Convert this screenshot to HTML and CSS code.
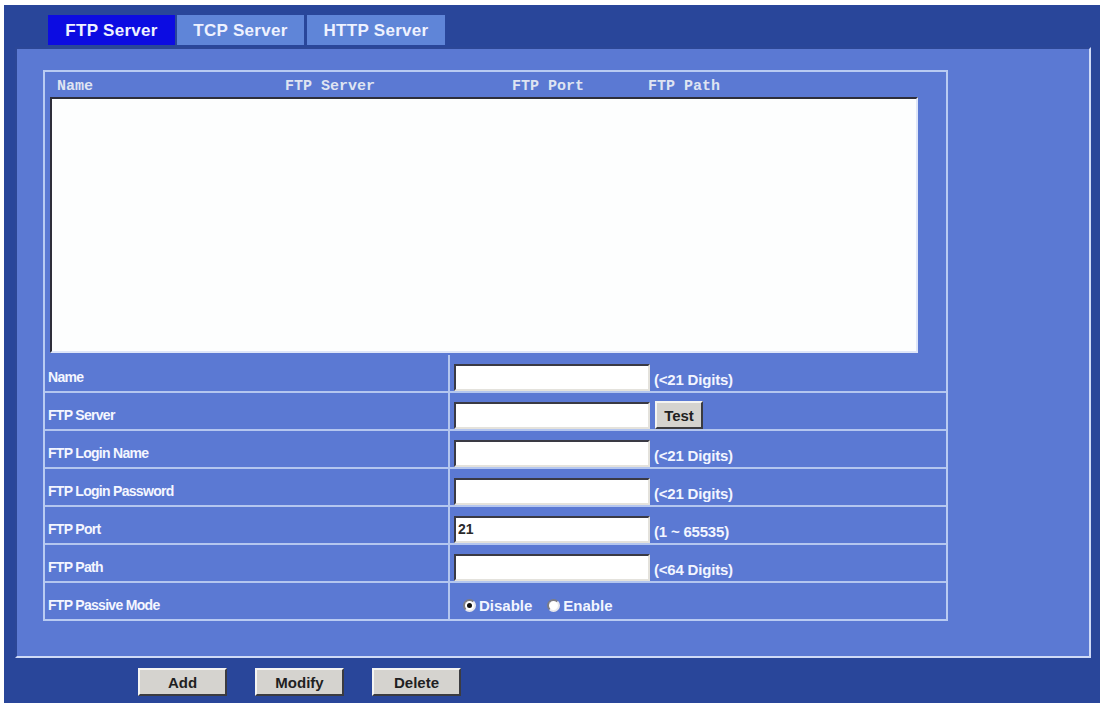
FILE: index.html
```html
<!DOCTYPE html>
<html lang="en">
<head>
  <meta charset="UTF-8"/>
  <title>FTP Server</title>
  <link rel="stylesheet" href="styles.css">
</head>
<body>
  <div class="screen">

    <div class="tabs">
      <div class="tab active">FTP Server</div>
      <div class="tab">TCP Server</div>
      <div class="tab wide">HTTP Server</div>
    </div>

    <div class="panel">
      <div class="form">

        <!-- server list -->
        <div class="list-head">
          <div class="cols">
            <span>Name</span>
            <span>FTP Server</span>
            <span>FTP Port</span>
            <span>FTP Path</span>
          </div>
          <div class="list"></div>
        </div>

        <div class="row">
          <div class="label">Name</div>
          <div class="value"><input class="field" type="text"><span class="hint">(&lt;21 Digits)</span></div>
        </div>
        <div class="row">
          <div class="label">FTP Server</div>
          <div class="value"><input class="field" type="text"><button class="btn test">Test</button></div>
        </div>
        <div class="row">
          <div class="label">FTP Login Name</div>
          <div class="value"><input class="field" type="text"><span class="hint">(&lt;21 Digits)</span></div>
        </div>
        <div class="row">
          <div class="label">FTP Login Password</div>
          <div class="value"><input class="field" type="text"><span class="hint">(&lt;21 Digits)</span></div>
        </div>
        <div class="row">
          <div class="label">FTP Port</div>
          <div class="value"><input class="field" type="text" value="21"><span class="hint">(1 ~ 65535)</span></div>
        </div>
        <div class="row">
          <div class="label">FTP Path</div>
          <div class="value"><input class="field" type="text"><span class="hint">(&lt;64 Digits)</span></div>
        </div>
        <div class="row">
          <div class="label">FTP Passive Mode</div>
          <div class="value radios">
            <span class="radio checked"></span><span class="opt">Disable</span>
            <span class="radio"></span><span class="opt">Enable</span>
          </div>
        </div>

      </div>
    </div>

    <div class="actions">
      <button class="btn action">Add</button>
      <button class="btn action">Modify</button>
      <button class="btn action">Delete</button>
    </div>

  </div>
</body>
</html>
```

FILE: styles.css
```css
html, body {
  margin: 0;
  padding: 0;
  background: #ffffff;
  font-family: "Liberation Sans", Arial, sans-serif;
}

.screen {
  margin: 5px 0 0 4px;
  width: 1096px;
  height: 698px;
  padding-top: 10px;
  box-sizing: border-box;
  background: #29469a;
  overflow: hidden;
}

/* Tabs */
.tabs {
  display: flex;
  gap: 2px;
  margin-left: 44px;
  height: 30px;
}

.tab {
  width: 127px;
  line-height: 31px;
  text-align: center;
  font-size: 17px;
  font-weight: bold;
  letter-spacing: 0.3px;
  color: #eef2ff;
  background: #5f85d8;
}

.tab.wide {
  width: 138px;
  margin-left: 1px;
}

.tab.active {
  background: #0c0ce2;
}

/* Panel */
.panel {
  margin: 2px 0 0 11px;
  width: 1076px;
  height: 611px;
  box-sizing: border-box;
  padding: 21px 0 0 26px;
  background: #5b79d3;
  border: 2px solid;
  border-color: #2c4797 #cfdaf6 #cfdaf6 #2c4797;
}

.form {
  width: 905px;
  box-sizing: border-box;
  border: 2px solid #b9cbf2;
}

.list-head {
  padding: 0 0 2px 5px;
}

.cols {
  display: grid;
  grid-template-columns: 228px 227px 136px auto;
  padding: 4px 0 0 7px;
  height: 21px;
  line-height: 21px;
  font-family: "Liberation Mono", "Courier New", monospace;
  font-size: 15px;
  font-weight: bold;
  color: #dfe4f2;
}

.list {
  width: 868px;
  height: 256px;
  box-sizing: border-box;
  background: #fdfefe;
  border: 2px solid;
  border-color: #2e2e3a #dfe6f8 #dfe6f8 #2e2e3a;
}

/* Rows */
.row {
  display: flex;
  height: 38px;
  box-sizing: border-box;
  border-bottom: 2px solid #b4c6ef;
}

.row:last-child {
  height: 36px;
  border-bottom: 0;
}

.label {
  width: 405px;
  box-sizing: border-box;
  padding: 8px 0 0 3px;
  display: flex;
  align-items: center;
  border-right: 2px solid #b4c6ef;
  font-size: 14px;
  font-weight: bold;
  letter-spacing: -0.7px;
  color: #f4f6ff;
}

.value {
  flex: 1;
  display: flex;
  align-items: center;
  padding: 8px 0 0 4px;
}

.field {
  width: 196px;
  height: 27px;
  box-sizing: border-box;
  margin: 0;
  padding: 1px 2px;
  background: #ffffff;
  border: 2px solid;
  border-color: #3a3a44 #e4e2dc #e4e2dc #3a3a44;
  font-family: "Liberation Sans", Arial, sans-serif;
  font-size: 14px;
  font-weight: bold;
  color: #2a2a2a;
  outline: none;
}

.hint {
  margin-left: 4px;
  padding-top: 4px;
  font-size: 15px;
  font-weight: bold;
  letter-spacing: -0.2px;
  color: #f2f5ff;
}

/* Buttons */
.btn {
  box-sizing: border-box;
  margin: 0;
  padding: 0;
  background: #d5d3cf;
  border: 2px solid;
  border-color: #f4f4f2 #3b3b40 #3b3b40 #f4f4f2;
  font-family: "Liberation Sans", Arial, sans-serif;
  font-size: 15px;
  font-weight: bold;
  color: #1f1f22;
}

.test {
  width: 48px;
  height: 28px;
  margin-left: 5px;
}

.actions {
  display: flex;
  gap: 28px;
  margin-top: 10px;
  padding-left: 134px;
}

.action {
  width: 89px;
  height: 28px;
}

/* Radios */
.radios {
  padding-left: 13px;
}

.radio {
  width: 13px;
  height: 13px;
  box-sizing: border-box;
  border-radius: 50%;
  background: #ffffff;
  border: 2px solid;
  border-color: #7c7c84 #e8e8ec #e8e8ec #7c7c84;
  position: relative;
}

.radio.checked::after {
  content: "";
  position: absolute;
  left: 2px;
  top: 2px;
  width: 5px;
  height: 5px;
  border-radius: 50%;
  background: #111;
}

.opt {
  margin: 0 15px 0 3px;
  font-size: 15px;
  font-weight: bold;
  color: #f2f5ff;
}
```
